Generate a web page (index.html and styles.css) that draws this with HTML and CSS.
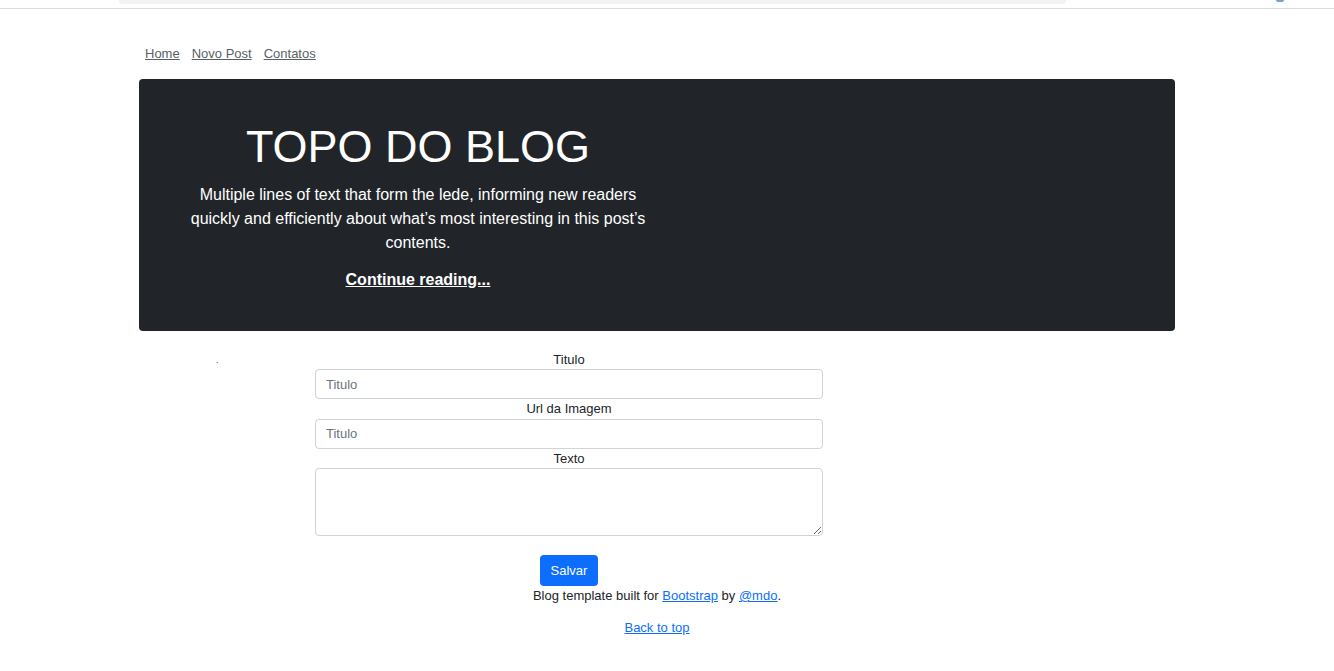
FILE: index.html
```html
<!DOCTYPE html>
<html lang="pt">
<head>
<meta charset="utf-8">
<title>Blog</title>
<link rel="stylesheet" href="styles.css">
</head>
<body>
<div class="chrome">
  <div class="chrome-bar"></div>
  <div class="chrome-dot"></div>
</div>
<div class="container">
  <nav class="nav">
    <a href="#">Home</a>
    <a href="#">Novo Post</a>
    <a href="#">Contatos</a>
  </nav>
  <div class="hero">
    <div class="hero-col">
      <h1 class="hero-title">TOPO DO BLOG</h1>
      <p class="lead">Multiple lines of text that form the lede, informing new readers quickly and efficiently about what’s most interesting in this post’s contents.</p>
      <p class="lead lead-last"><a href="#" class="hero-link">Continue reading...</a></p>
    </div>
  </div>
  <div class="form-row">
    <div class="side"><span class="dot">.</span></div>
    <form class="post-form">
      <label class="label" for="titulo">Titulo</label>
      <input class="input" id="titulo" type="text" placeholder="Titulo">
      <label class="label" for="url">Url da Imagem</label>
      <input class="input" id="url" type="text" placeholder="Titulo">
      <label class="label" for="texto">Texto</label>
      <textarea class="textarea" id="texto"></textarea>
      <div class="actions"><button type="button" class="btn">Salvar</button></div>
    </form>
  </div>
  <footer class="footer">
    <p>Blog template built for <a href="#">Bootstrap</a> by <a href="#">@mdo</a>.</p>
    <p class="back"><a href="#">Back to top</a></p>
  </footer>
</div>
</body>
</html>
```
FILE: styles.css
```css
* { box-sizing: border-box; }
body {
  margin: 0;
  font-family: "Liberation Sans", Arial, sans-serif;
  font-size: 13px;
  line-height: 1.5;
  color: #212529;
  background: #fff;
}
.chrome {
  display: flex;
  align-items: flex-start;
  height: 9px;
  border-bottom: 1px solid #dadce0;
  padding-left: 119px;
}
.chrome-bar {
  width: 947px;
  height: 4px;
  background: #f1f3f4;
  border-radius: 0 0 8px 8px;
}
.chrome-dot {
  margin-left: 210px;
  width: 8px;
  height: 2px;
  background: #7f9fc8;
  border-radius: 0 0 3px 3px;
}
.container {
  margin-left: 139px;
  width: 1036px;
}
.nav {
  display: flex;
  padding-top: 35px;
  margin-bottom: 15px;
  line-height: 20px;
}
.nav a {
  color: #595f66;
  padding: 0 6px;
  text-decoration: underline;
}
.hero {
  background: #212529;
  border-radius: 4px;
  padding: 40px 40px 39px;
  color: #fff;
}
.hero-col {
  width: 478px;
  text-align: center;
}
.hero-title {
  margin: 0 0 9px;
  font-size: 45px;
  font-weight: 400;
  line-height: 55px;
}
.lead {
  margin: 0 0 13px;
  font-size: 16px;
  line-height: 24px;
}
.lead-last { margin-bottom: 0; }
.hero-link {
  color: #fff;
  font-weight: 700;
}
.form-row {
  display: flex;
  margin-top: 18.5px;
}
.side {
  width: 176px;
  padding-left: 77px;
  line-height: 19px;
}
.dot { font-size: 9px; color: #444; position: relative; top: -1px; }
.post-form {
  width: 508px;
  display: flex;
  flex-direction: column;
}
.label {
  text-align: center;
  line-height: 19.5px;
  height: 19.5px;
}
.input {
  height: 30px;
  border: 1px solid #ced4da;
  border-radius: 4px;
  padding: 0 10px;
  font-family: inherit;
  font-size: 13px;
  color: #212529;
}
.input::placeholder { color: #6c757d; }
.textarea {
  height: 68px;
  border: 1px solid #ced4da;
  border-radius: 4px;
  font-family: inherit;
  font-size: 13px;
  resize: vertical;
}
.actions {
  display: flex;
  justify-content: center;
  margin-top: 19px;
}
.btn {
  width: 58px;
  height: 31px;
  background: #0d6efd;
  color: #fff;
  border: none;
  border-radius: 4px;
  font-family: inherit;
  font-size: 13px;
  padding: 0;
}
.footer {
  text-align: center;
  color: #212529;
}
.footer p { margin: 0; line-height: 19.5px; }
.footer .back { margin-top: 12px; }
.footer a { color: #0d6efd; }
```
